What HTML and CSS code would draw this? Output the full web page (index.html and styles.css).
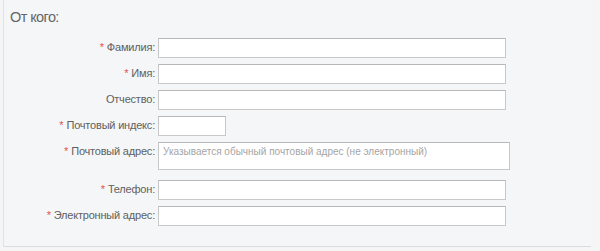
FILE: index.html
```html
<!DOCTYPE html>
<html>
<head>
    <title>От кого</title>
    <link rel="stylesheet" href="styles.css">
</head>
<body>
    <div class="panel">
        <h2 class="panel-title">От кого:</h2>

        <div class="form-row">
            <label class="field-label"><span class="req">*</span>Фамилия:</label>
            <input class="field" type="text">
        </div>
        <div class="form-row">
            <label class="field-label"><span class="req">*</span>Имя:</label>
            <input class="field" type="text">
        </div>
        <div class="form-row">
            <label class="field-label">Отчество:</label>
            <input class="field" type="text">
        </div>
        <div class="form-row">
            <label class="field-label"><span class="req">*</span>Почтовый индекс:</label>
            <input class="field field-short" type="text">
        </div>
        <div class="form-row form-row-wide">
            <label class="field-label"><span class="req">*</span>Почтовый адрес:</label>
            <textarea class="field field-area" placeholder="Указывается обычный почтовый адрес (не электронный)"></textarea>
        </div>
        <div class="form-row">
            <label class="field-label"><span class="req">*</span>Телефон:</label>
            <input class="field" type="text">
        </div>
        <div class="form-row">
            <label class="field-label"><span class="req">*</span>Электронный адрес:</label>
            <input class="field" type="text">
        </div>
    </div>
</body>
</html>
```

FILE: styles.css
```css
body {
    margin: 0;
    padding: 0;
    background-color: #f5f5f5;
    font-family: "Liberation Sans", Arial, sans-serif;
}
.panel {
    margin-left: 3px;
    width: 588px;
    height: 247px;
    box-sizing: border-box;
    padding-top: 8px;
    background-color: #f4f6f8;
    border-left: 1px solid #e2e3e5;
    border-bottom: 1px solid #dcdcdc;
}
.panel-title {
    margin: 0 0 12px 6px;
    font-size: 14.5px;
    line-height: 18px;
    letter-spacing: -0.6px;
    font-weight: normal;
    color: #666;
}
.form-row {
    display: flex;
    align-items: flex-start;
    margin-bottom: 6px;
}
.form-row-wide {
    margin-bottom: 10px;
}
.field-label {
    width: 151px;
    padding-top: 3px;
    padding-right: 3px;
    text-align: right;
    font-size: 11px;
    line-height: 13px;
    letter-spacing: -0.2px;
    color: #606060;
}
.req {
    margin-right: 3px;
    color: #e0544c;
}
.field {
    width: 348px;
    height: 20px;
    box-sizing: border-box;
    margin: 0;
    border: 1px solid #c8c8c8;
    border-top-color: #b8b8b8;
    background-color: #fff;
    font-family: "Liberation Sans", Arial, sans-serif;
    font-size: 10px;
}
.field-short {
    width: 68px;
}
.field-area {
    width: 352px;
    height: 28px;
    padding: 3px 4px;
    resize: none;
    line-height: 12px;
}
.field-area::placeholder {
    color: #a5a5a5;
}
```
